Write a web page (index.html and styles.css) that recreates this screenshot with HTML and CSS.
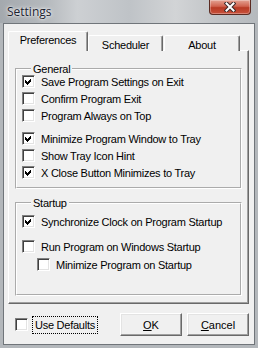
FILE: index.html
```html
<!DOCTYPE html>
<html>
<head>
    <title>Settings</title>
    <link rel="stylesheet" href="styles.css">
</head>
<body>
    <div class="titlebar">
        <span class="title">Settings</span>
        <span class="close">
            <svg width="12" height="10" viewBox="0 0 12 10">
                <path d="M2.5 1.5 L9.5 8.5 M9.5 1.5 L2.5 8.5" stroke="#3b2a2a" stroke-width="4" stroke-linecap="square"/>
                <path d="M2.5 1.5 L9.5 8.5 M9.5 1.5 L2.5 8.5" stroke="#fff" stroke-width="2" stroke-linecap="square"/>
            </svg>
        </span>
    </div>

    <div class="client">
        <div class="tabs">
            <div class="tab active">Preferences</div>
            <div class="tab sched">Scheduler</div>
            <div class="tab about">About</div>
        </div>

        <div class="panel">
            <fieldset class="group general">
                <legend>General</legend>
                <label class="row first"><span class="box"><svg width="9" height="9" viewBox="0 0 9 9"><path d="M1 3 L3 5 L7 1 L7 4 L3 8 L1 6 Z" fill="#000" shape-rendering="crispEdges"/></svg></span>Save Program Settings on Exit</label>
                <label class="row"><span class="box"></span>Confirm Program Exit</label>
                <label class="row"><span class="box"></span>Program Always on Top</label>
                <label class="row spaced"><span class="box"><svg width="9" height="9" viewBox="0 0 9 9"><path d="M1 3 L3 5 L7 1 L7 4 L3 8 L1 6 Z" fill="#000" shape-rendering="crispEdges"/></svg></span>Minimize Program Window to Tray</label>
                <label class="row"><span class="box"></span>Show Tray Icon Hint</label>
                <label class="row"><span class="box"><svg width="9" height="9" viewBox="0 0 9 9"><path d="M1 3 L3 5 L7 1 L7 4 L3 8 L1 6 Z" fill="#000" shape-rendering="crispEdges"/></svg></span>X Close Button Minimizes to Tray</label>
            </fieldset>

            <fieldset class="group startup">
                <legend>Startup</legend>
                <label class="row first"><span class="box"><svg width="9" height="9" viewBox="0 0 9 9"><path d="M1 3 L3 5 L7 1 L7 4 L3 8 L1 6 Z" fill="#000" shape-rendering="crispEdges"/></svg></span>Synchronize Clock on Program Startup</label>
                <label class="row run"><span class="box"></span>Run Program on Windows Startup</label>
                <label class="row sub"><span class="box"></span>Minimize Program on Startup</label>
            </fieldset>
        </div>

        <div class="footer">
            <label class="row defaults"><span class="box"></span><span class="focus">Use Defaults</span></label>
            <button class="btn ok"><u>O</u>K</button>
            <button class="btn"><u>C</u>ancel</button>
        </div>
    </div>
</body>
</html>
```

FILE: styles.css
```css
* { box-sizing: border-box; }
body { margin: 0; width: 258px; height: 348px; overflow: hidden; background: #b3b7bb; font: 11px "Liberation Sans", Arial, sans-serif; letter-spacing: -0.25px; color: #000; }

.titlebar { height: 23px; display: flex; justify-content: space-between; align-items: flex-start; background: linear-gradient(90deg, #a4a9ae 0%, #b5b9bd 18%, #cdd0d3 30%, #bfc3c7 50%, #d2d4d6 68%, #c3c6c9 82%, #b5b9bd 100%); }
.title { font: 12px "Open Sans", sans-serif; letter-spacing: 0; padding: 3px 0 0 7px; color: #1c2230; text-shadow: 0 0 5px #fff, 0 0 2px #fff; }
.close { width: 42px; height: 15px; margin-right: 7px; border: 1px solid #5b2b22; border-top: none; border-radius: 0 0 4px 4px; background: linear-gradient(#e4a393, #d0634f 45%, #b83a24 55%, #c8523c); box-shadow: inset 0 0 0 1px rgba(255,255,255,0.3); display: flex; align-items: center; justify-content: center; }

.client { margin: 0 3px; height: 322px; border: 1px solid #70757a; background: #f0f0f0; padding: 7px 0 0 4px; }

.tabs { display: flex; align-items: flex-end; height: 20px; }
.tab { height: 16px; padding-top: 3px; line-height: 13px; text-align: center; background: #f0f0f0; border-left: 1px solid #fff; border-top: 1px solid #fff; border-right: 1px solid #696969; border-radius: 2px 2px 0 0; box-shadow: inset -1px 0 0 #a0a0a0; }
.tab.active { position: relative; z-index: 1; width: 80px; height: 20px; padding-top: 2px; }
.tab.sched { width: 75px; }
.tab.about { width: 76px; margin-left: 1px; }

.panel { margin-top: -1px; width: 241px; height: 254px; border-top: 1px solid #fff; border-left: 1px solid #fff; border-right: 1px solid #696969; border-bottom: 1px solid #696969; box-shadow: inset -1px -1px 0 #a0a0a0; }

.group { margin: 0 6px; padding: 0 5px; min-width: 0; border: 2px groove #fff; }
.group legend { margin-left: 9px; padding: 0 2px; line-height: 12px; }
.general { margin-top: 12px; padding-bottom: 6px; }
.startup { margin-top: 8px; padding-bottom: 21px; }
.general .first { margin-top: -2px; }
.startup .first { margin-top: 4px; }

.row { display: flex; align-items: center; height: 17px; white-space: nowrap; }
.row.spaced { margin-top: 6px; }
.row.run { margin-top: 8px; }
.row.sub { margin-top: 1px; padding-left: 15px; }

.box { flex: none; width: 13px; height: 13px; margin-right: 6px; background: #fff; border: 1px solid; border-color: #808080 #fff #fff #808080; box-shadow: inset 1px 1px 0 #404040, inset -1px -1px 0 #e3e3e3; padding: 1px 0 0 1px; display: flex; }

.footer { display: flex; align-items: center; height: 23px; margin-top: 9px; }
.defaults { margin-left: 7px; height: 19px; }
.defaults .box { margin-right: 4px; }
.focus { border: 1px dotted #000; padding: 0 2px; line-height: 16px; }
.btn { width: 62px; height: 23px; padding: 0; font: inherit; color: #000; background: #f0f0f0; border: 1px solid; border-color: #fff #696969 #696969 #fff; box-shadow: inset -1px -1px 0 #a0a0a0, inset 1px 1px 0 #e3e3e3; margin-left: 5px; }
.btn.ok { margin-left: auto; }
.btn:last-child { margin-right: 5px; }
```
